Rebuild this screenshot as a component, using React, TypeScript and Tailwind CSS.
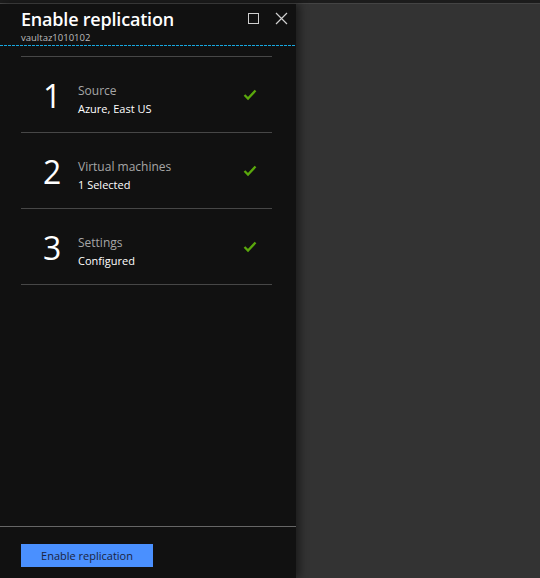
import React from "react";

const steps = [
  { n: "1", label: "Source", value: "Azure, East US" },
  { n: "2", label: "Virtual machines", value: "1 Selected" },
  { n: "3", label: "Settings", value: "Configured" },
];

function Check() {
  return (
    <svg width="14" height="12" viewBox="0 0 14 12" fill="none">
      <path d="M1.5 6 L5 9.5 L12.5 1.5" stroke="#5aa80c" strokeWidth="2.3" />
    </svg>
  );
}

export default function App() {
  return (
    <div
      className="w-[540px] h-[578px] flex flex-col bg-[#333333] overflow-hidden"
      style={{ fontFamily: '"Open Sans", "Noto Sans", sans-serif' }}
    >
      <div className="h-[3px] bg-[#1c1c1c] shrink-0" />
      <div className="h-px bg-[#444444] shrink-0" />
      <div className="flex flex-1 min-h-0">
        <div className="w-[296px] bg-[#111111] flex flex-col shadow-[4px_0_8px_rgba(0,0,0,0.45)] relative z-10">
          <div className="relative pl-[21px] pt-[3px] h-[41px]">
            <div className="text-[18px] font-semibold text-white leading-[24px] tracking-[-0.2px]">
              Enable replication
            </div>
            <div className="text-[9.5px] text-[#bdbdbd] leading-[12px] mt-[1px]">vaultaz1010102</div>
            <div className="absolute right-[8px] top-[8px] flex items-center gap-[16px]">
              <div className="w-[11px] h-[11px] border border-[#cfcfcf]" />
              <svg width="13" height="13" viewBox="0 0 13 13">
                <path d="M1 1 L12 12 M12 1 L1 12" stroke="#cfcfcf" strokeWidth="1.2" />
              </svg>
            </div>
          </div>
          <div className="h-px shrink-0 bg-[#0f95c8] flex">
            <div className="flex-1 bg-[repeating-linear-gradient(90deg,#17a8e0_0px,#17a8e0_3px,#111111_3px,#111111_4px)]" />
          </div>
          <div className="px-[21px] pt-[10px] flex flex-col">
            <div className="h-px bg-[#474747] mr-[3px]" />
            {steps.map((s) => (
              <div key={s.n} className="flex flex-col">
                <div className="h-[75px] flex items-start pt-[20px]">
                  <div className="w-[57px] pl-[22px] text-[32px] text-white leading-[38px]">{s.n}</div>
                  <div className="flex-1 flex flex-col pt-[6px]">
                    <div className="text-[12px] text-[#a6a6a6] leading-[16px]">{s.label}</div>
                    <div className="text-[11px] text-white leading-[16px] mt-[2px]">{s.value}</div>
                  </div>
                  <div className="pt-[12px] pr-[18px]">
                    <Check />
                  </div>
                </div>
                <div className="h-px bg-[#474747] mr-[3px]" />
              </div>
            ))}
          </div>
          <div className="flex-1" />
          <div className="h-px bg-[#666666] shrink-0" />
          <div className="h-[51px] shrink-0 pl-[21px] pt-[15px]">
            <button className="w-[132px] h-[23px] bg-[#4a90ff] text-[#1b2440] text-[11px] leading-[23px] text-center">
              Enable replication
            </button>
          </div>
        </div>
        <div className="flex-1 bg-[#333333]" />
      </div>
    </div>
  );
}
